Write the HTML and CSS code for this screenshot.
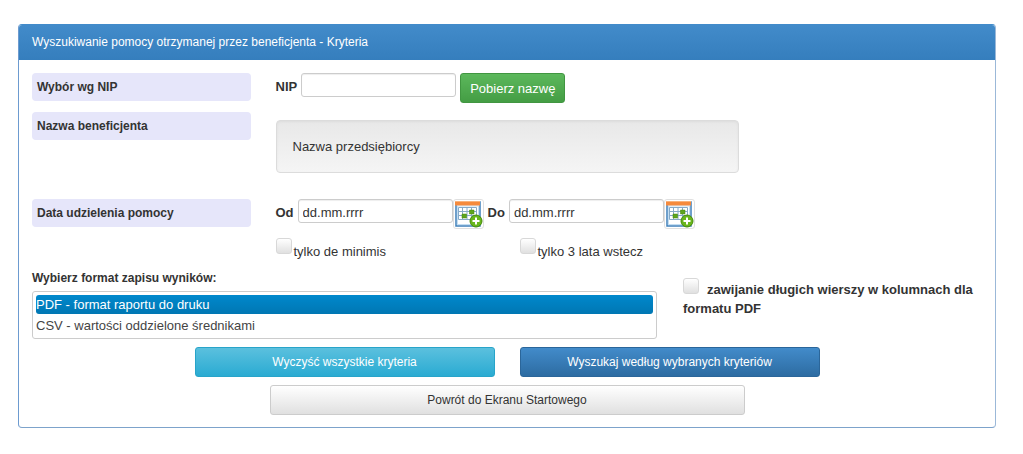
FILE: index.html
```html
<!DOCTYPE html>
<html lang="pl">
<head>
<meta charset="utf-8">
<meta name="viewport" content="width=device-width, initial-scale=1">
<title>Wyszukiwanie pomocy</title>
<link rel="stylesheet" href="styles.css">
</head>
<body>
<svg class="sprite" aria-hidden="true">
  <symbol id="calendar" viewBox="0 0 28 28">
    <rect x="1" y="2" width="24" height="24" fill="#fff" stroke="#3f80bb" stroke-width="1.500"/>
    <rect x="2.500" y="6" width="21" height="18.500" fill="none" stroke="#c4def2"/>
    <rect x="0" y="1" width="25" height="4.500" fill="#f58a3c"/>
    <rect x="0" y="1" width="25" height="1" fill="#f9b27a"/>
    <path d="M3.500 7.500h18v12h-18zM3.500 11.500h18M3.500 15.500h18M7.500 7.500v12M12 7.500v12M16.500 7.500v12" fill="none" stroke="#86aac8"/>
    <path d="M14.500 10h4.500v4h-4.500zM7 14h4.500v4h-4.500z" fill="#5da51d" stroke="#47860f" stroke-width=".5"/>
    <circle cx="21" cy="21" r="6" fill="#68b61c" stroke="#45890d"/>
    <path d="M21 17.500v7M17.500 21h7" stroke="#fff" stroke-width="2"/>
  </symbol>
</svg>
<form class="panel">
  <h1 class="panel-title">Wyszukiwanie pomocy otrzymanej przez beneficjenta - Kryteria</h1>
  <div class="panel-body">
    <div class="criteria">
      <div class="caption">Wybór wg NIP</div>
      <div class="line">
        <label class="strong" for="nip">NIP</label>
        <input class="field" id="nip" type="text">
        <button class="btn btn-fetch" type="button">Pobierz nazwę</button>
      </div>
      <div class="caption">Nazwa beneficjenta</div>
      <div class="well">Nazwa przedsiębiorcy</div>
      <div class="caption">Data udzielenia pomocy</div>
      <div class="dates">
        <div class="line">
          <label class="strong" for="from">Od</label>
          <span class="date"><input class="field" id="from" type="text" value="dd.mm.rrrr"><button class="pick" type="button" aria-label="Wybierz datę od"><svg><use href="#calendar"/></svg></button></span>
          <label class="strong" for="to">Do</label>
          <span class="date"><input class="field" id="to" type="text" value="dd.mm.rrrr"><button class="pick" type="button" aria-label="Wybierz datę do"><svg><use href="#calendar"/></svg></button></span>
        </div>
        <div class="checks">
          <label class="check"><input class="tick" type="checkbox"><span>tylko de minimis</span></label>
          <label class="check"><input class="tick" type="checkbox"><span>tylko 3 lata wstecz</span></label>
        </div>
      </div>
    </div>
    <div class="output">
      <div class="format">
        <label class="format-label" for="format">Wybierz format zapisu wyników:</label>
        <select class="list" id="format" size="2">
          <option selected>PDF - format raportu do druku</option>
          <option>CSV - wartości oddzielone średnikami</option>
        </select>
      </div>
      <label class="wrap"><input class="tick" type="checkbox">zawijanie długich wierszy w kolumnach dla formatu PDF</label>
    </div>
    <div class="actions">
      <button class="btn btn-clear" type="button">Wyczyść wszystkie kryteria</button>
      <button class="btn btn-search" type="button">Wyszukaj według wybranych kryteriów</button>
    </div>
    <div class="back">
      <button class="btn btn-back" type="button">Powrót do Ekranu Startowego</button>
    </div>
  </div>
</form>
</body>
</html>
```
FILE: styles.css
```css
* { box-sizing: border-box; }
body {
  margin: 24px 27px 24px 18px;
  background: #fff;
  color: #333;
  font: 13px/19px "Liberation Sans", Arial, sans-serif;
}
.sprite { display: none; }
.panel {
  border: 1px solid #428bca;
  border-color: #428bca #9bb8d8 #7da3cb #6d9bd0;
  border-radius: 4px;
  overflow: hidden;
}
.panel-title {
  margin: 0;
  padding: 8px 13px;
  background: linear-gradient(#428bca, #357ebd);
  color: #fff;
  font-size: 12px;
  font-weight: 400;
  line-height: 19px;
}
.panel-body { padding: 13px 13px 12px; }
.criteria {
  display: grid;
  grid-template-columns: 23% 1fr;
  column-gap: 25px;
  align-items: start;
}
.caption {
  height: 28px;
  padding: 0 5px;
  border-radius: 4px;
  background: #e6e6fa;
  font-size: 12px;
  font-weight: 700;
  line-height: 28px;
}
.line {
  display: flex;
  align-items: flex-start;
  gap: 4px;
  min-height: 39px;
}
.strong { font-weight: 700; line-height: 28px; }
.field {
  width: 155px;
  height: 24px;
  padding: 3px 4px 0;
  border: 1px solid #ccc;
  border-radius: 3px;
  background: #fff;
  box-shadow: inset 0 1px 1px rgba(0, 0, 0, .07);
  color: #333;
  font: inherit;
}
.btn {
  height: 30px;
  padding: 0 9px;
  border: 1px solid;
  border-radius: 3px;
  color: #fff;
  font: inherit;
}
.btn-fetch {
  background: linear-gradient(#5cb85c, #449d44);
  border-color: #419641;
}
.well {
  width: 463px;
  max-width: 100%;
  height: 53px;
  margin: 8px 0 26px;
  padding: 16px;
  border: 1px solid #dcdcdc;
  border-radius: 4px;
  background: linear-gradient(#e8e8e8, #f5f5f5);
  box-shadow: inset 0 1px 3px rgba(0, 0, 0, .05);
}
.date { display: flex; align-items: flex-start; }
.pick {
  display: flex;
  height: 30px;
  padding: 0 0 0 1px;
  border: 1px solid #e0e0e0;
  border-radius: 3px;
  background: #fff;
}
.pick svg { width: 28px; height: 28px; }
.checks { display: grid; grid-template-columns: 244px 1fr; }
.check { display: flex; gap: 2px; }
.check span { padding-top: 4px; }
.tick {
  appearance: none;
  flex: none;
  width: 16px;
  height: 16px;
  margin: 0;
  border: 1px solid #d8d8d8;
  border-radius: 3px;
  background: linear-gradient(#fff, #e0e0e0);
}
.output {
  display: flex;
  gap: 26px;
  margin-top: 8px;
}
.format { width: 625px; flex: 0 1 auto; }
.format-label {
  display: block;
  padding-bottom: 3px;
  font-size: 12px;
  font-weight: 700;
}
.list {
  display: block;
  width: 100%;
  height: 48px;
  padding: 3px;
  border: 1px solid #ccc;
  border-radius: 3px;
  background: #fff;
  color: #444;
  font: inherit;
  overflow: hidden;
}
.list option {
  min-height: 0;
  height: 19px;
  margin-bottom: 2px;
  padding: 2px 0 0;
  border-radius: 3px;
  line-height: 17px;
}
.list option:checked {
  background: #0081c2 linear-gradient(#0088cc, #0077b3);
  color: #fff;
}
.wrap { flex: 1; padding-top: 9px; font-weight: 700; }
.wrap .tick { margin-right: 8px; }
.actions {
  display: grid;
  grid-template-columns: 300px 300px;
  justify-content: center;
  gap: 25px;
  margin-top: 8px;
}
.actions .btn, .back .btn { font-size: 12px; }
.btn-clear {
  background: linear-gradient(#5bc0de, #2aabd2);
  border-color: #28a4c9;
}
.btn-search {
  background: linear-gradient(#428bca, #2d6ca2);
  border-color: #2b669a;
}
.back { display: flex; justify-content: center; margin-top: 8px; }
.btn-back {
  width: 50%;
  border-color: #ccc;
  background: linear-gradient(#fff, #e0e0e0);
  color: #333;
}
```
